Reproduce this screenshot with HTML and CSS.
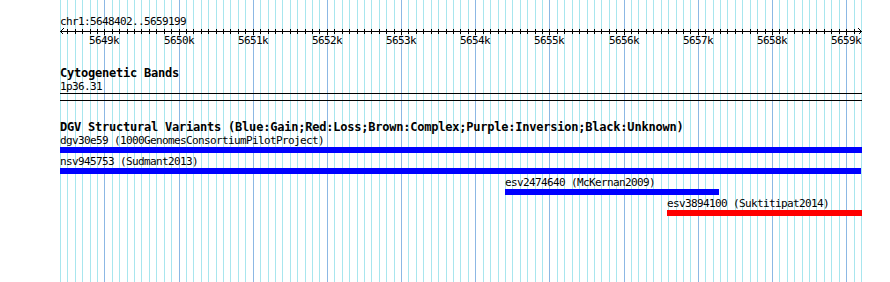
FILE: index.html
```html
<!DOCTYPE html>
<html>

<head>
    <title>DGV Structural Variants</title>
    <link rel="stylesheet" href="styles.css">
</head>

<body>
    <div id="panel">
        <svg id="grid" width="802" height="282"></svg>

        <div class="track ruler">
            <div class="segment-label">chr1:5648402..5659199</div>
            <svg id="axis" width="802" height="6"></svg>
            <div id="tick-labels"></div>
        </div>

        <div class="track">
            <div class="track-title">Cytogenetic Bands</div>
            <div class="feature-label">1p36.31</div>
            <div class="band"></div>
        </div>

        <div class="track">
            <div class="track-title">DGV Structural Variants (Blue:Gain;Red:Loss;Brown:Complex;Purple:Inversion;Black:Unknown)</div>
            <div id="variants"></div>
        </div>
    </div>

    <script>
        const START = 5648402;
        const END = 5659199;
        const WIDTH = 802;
        const SCALE = 801 / (END - START + 1); // pixels per base

        const SVG_NS = 'http://www.w3.org/2000/svg';

        const variants = [
            { name: 'dgv30e59', study: '1000GenomesConsortiumPilotProject', start: 5636612, end: 5702940, type: 'gain' },
            { name: 'nsv945753', study: 'Sudmant2013', start: 5641080, end: 5659187, type: 'gain' },
            { name: 'esv2474640', study: 'McKernan2009', start: 5654401, end: 5657272, type: 'gain' },
            { name: 'esv3894100', study: 'Suktitipat2014', start: 5656585, end: 5671230, type: 'loss' }
        ];

        function toX(bp) {
            return Math.round((bp - START) * SCALE);
        }

        function addRect(svg, x, y, w, h, cls) {
            const rect = document.createElementNS(SVG_NS, 'rect');
            rect.setAttribute('x', x);
            rect.setAttribute('y', y);
            rect.setAttribute('width', w);
            rect.setAttribute('height', h);
            rect.setAttribute('class', cls);
            svg.appendChild(rect);
        }

        // background grid, one line every 100 bp
        const grid = document.getElementById('grid');
        for (let bp = 5648400; bp <= 5659200; bp += 100) {
            const x = Math.max(0, toX(bp));
            addRect(grid, x, 0, 1, 282, bp % 1000 === 0 ? 'grid-major' : 'grid-minor');
        }

        // ruler
        const axis = document.getElementById('axis');
        addRect(axis, 0, 3, WIDTH, 1, 'ink');
        for (let bp = 5648500; bp <= 5659100; bp += 100) {
            addRect(axis, toX(bp), 1, 1, bp % 1000 === 0 ? 6 : 5, 'ink');
        }
        const arrows = document.createElementNS(SVG_NS, 'path');
        arrows.setAttribute('d', 'M3.5 0.5 L0.5 3.5 L3.5 6.5 M798.5 0.5 L801.5 3.5 L798.5 6.5');
        arrows.setAttribute('class', 'arrow');
        axis.appendChild(arrows);

        const tickLabels = document.getElementById('tick-labels');
        for (let kb = 5649; kb <= 5659; kb++) {
            const label = document.createElement('span');
            label.textContent = kb + 'k';
            label.style.left = toX(kb * 1000) + 'px';
            tickLabels.appendChild(label);
        }

        // variant features
        const variantList = document.getElementById('variants');
        variants.forEach(v => {
            const x0 = Math.max(0, toX(v.start));
            const x1 = Math.min(WIDTH, toX(v.end) + 1);

            const row = document.createElement('div');
            row.className = 'variant';
            row.style.paddingLeft = x0 + 'px';

            const label = document.createElement('div');
            label.className = 'feature-label';
            label.textContent = v.name + ' (' + v.study + ')';

            const bar = document.createElement('div');
            bar.className = 'bar ' + v.type;
            bar.style.width = (x1 - x0) + 'px';

            row.appendChild(label);
            row.appendChild(bar);
            variantList.appendChild(row);
        });
    </script>
</body>

</html>
```

FILE: styles.css
```css
body {
    margin: 0;
    background-color: white;
    color: black;
    font-family: "DejaVu Sans Mono", monospace;
    font-size: 11px;
    letter-spacing: -0.62px;
    line-height: 13px;
}

#panel {
    position: relative;
    z-index: 0;
    width: 802px;
    height: 282px;
    margin-left: 60px;
}

#grid {
    position: absolute;
    top: 0;
    left: 0;
    z-index: -1;
}

.grid-minor {
    fill: #a8e6ee;
}

.grid-major {
    fill: #8cb8e4;
}

.ink {
    fill: black;
}

.arrow {
    fill: none;
    stroke: black;
    stroke-width: 1;
}

svg {
    display: block;
    overflow: visible;
    shape-rendering: crispEdges;
}

/* ruler */
.ruler {
    padding-top: 16px;
}

.segment-label {
    line-height: 12px;
    white-space: nowrap;
}

#tick-labels {
    position: relative;
    height: 13px;
}

#tick-labels span {
    position: absolute;
    top: 0;
    transform: translateX(-50%);
}

/* tracks */
.track-title {
    margin-top: 20px;
    font-size: 12px;
    font-weight: bold;
    letter-spacing: -0.22px;
    white-space: nowrap;
}

.feature-label {
    white-space: nowrap;
}

.band {
    height: 8px;
    box-sizing: border-box;
    border-top: 1px solid black;
    border-bottom: 1px solid black;
}

.variant {
    margin-bottom: 2px;
}

.bar {
    height: 6px;
}

.bar.gain {
    background-color: blue;
}

.bar.loss {
    background-color: red;
}
```
